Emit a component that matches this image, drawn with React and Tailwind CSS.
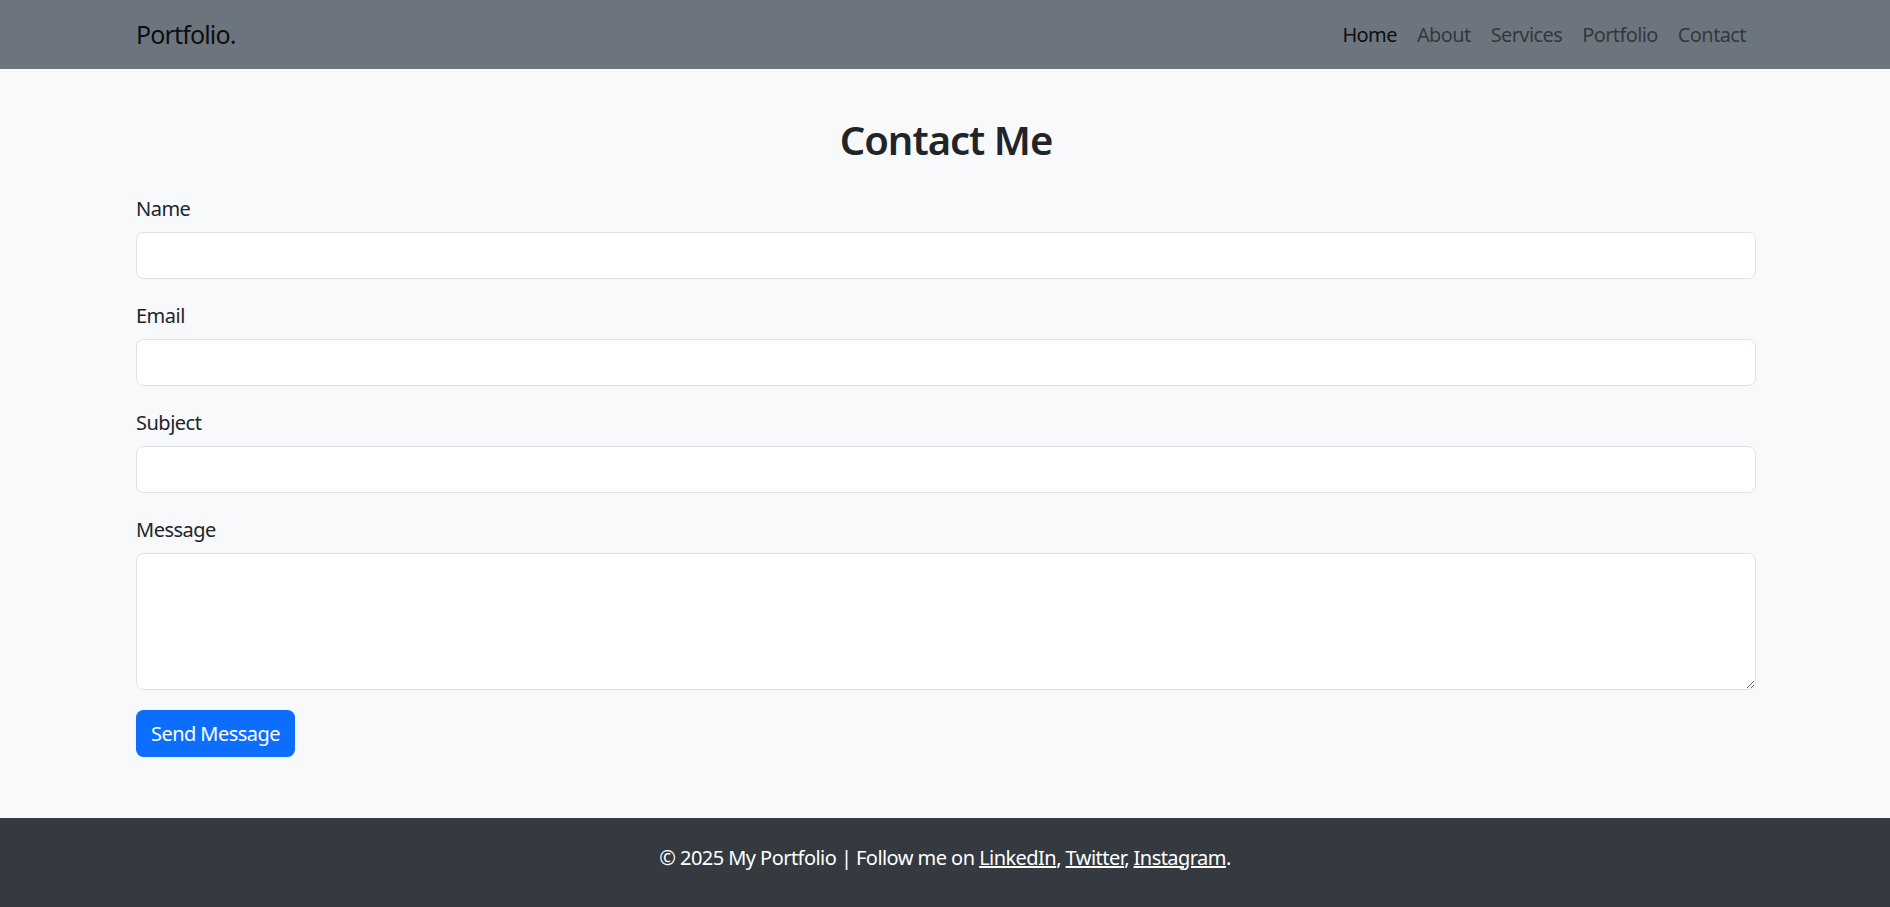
export default function App() {
  const font = { fontFamily: '"Noto Sans", "Open Sans", sans-serif' };
  const inputCls =
    "block w-full h-[47px] bg-white border border-[#dee2e6] rounded-[7.5px] px-[15px] text-[20px] text-[#212529] outline-none";
  const labelCls = "block text-[20px] leading-[30px] pt-[2px] mb-[8px] tracking-[-0.5px]";
  return (
    <div className="min-h-[907px] flex flex-col bg-[#f8f9fa] text-[#212529]" style={font}>
      <nav className="h-[69px] bg-[#6c757d]">
        <div className="mx-auto w-[1650px] pl-[16px] pr-[14px] h-full flex items-center justify-between">
          <a className="text-[25px] text-black/90 leading-none tracking-[-0.85px]">Portfolio.</a>
          <ul className="flex items-center text-[20px] tracking-[-0.6px]">
            <li className="px-[10px] text-black/90">Home</li>
            <li className="px-[10px] text-black/55">About</li>
            <li className="px-[10px] text-black/55">Services</li>
            <li className="px-[10px] text-black/55">Portfolio</li>
            <li className="px-[10px] text-black/55">Contact</li>
          </ul>
        </div>
      </nav>
      <main className="flex-1 pt-[47px] pb-[60px]">
        <div className="mx-auto w-[1650px] pl-[16px] pr-[14px]">
          <h2 className="text-center text-[40px] leading-[48px] font-semibold mb-[28px] tracking-[-1px]">Contact Me</h2>
          <form className="flex flex-col">
            <div className="mb-[20px]">
              <label className={labelCls}>Name</label>
              <input className={inputCls} />
            </div>
            <div className="mb-[20px]">
              <label className={labelCls}>Email</label>
              <input className={inputCls} />
            </div>
            <div className="mb-[20px]">
              <label className={labelCls}>Subject</label>
              <input className={inputCls} />
            </div>
            <div className="mb-[20px]">
              <label className={labelCls}>Message</label>
              <textarea className="block w-full h-[137px] bg-white border border-[#dee2e6] rounded-[7.5px] px-[15px] py-[7.5px] text-[20px] outline-none" />
            </div>
            <div>
              <button type="button" className="h-[47px] px-[15px] bg-[#0d6efd] text-white text-[20px] rounded-[7.5px] tracking-[-0.55px]">
                Send Message
              </button>
            </div>
          </form>
        </div>
      </main>
      <footer className="h-[89px] pb-[10px] bg-[#343a40] text-white text-[20px] flex items-center justify-center tracking-[-0.55px]">
        <p>
          © 2025 My Portfolio | Follow me on <a className="underline">LinkedIn</a>, <a className="underline">Twitter</a>,{" "}
          <a className="underline">Instagram</a>.
        </p>
      </footer>
    </div>
  );
}
